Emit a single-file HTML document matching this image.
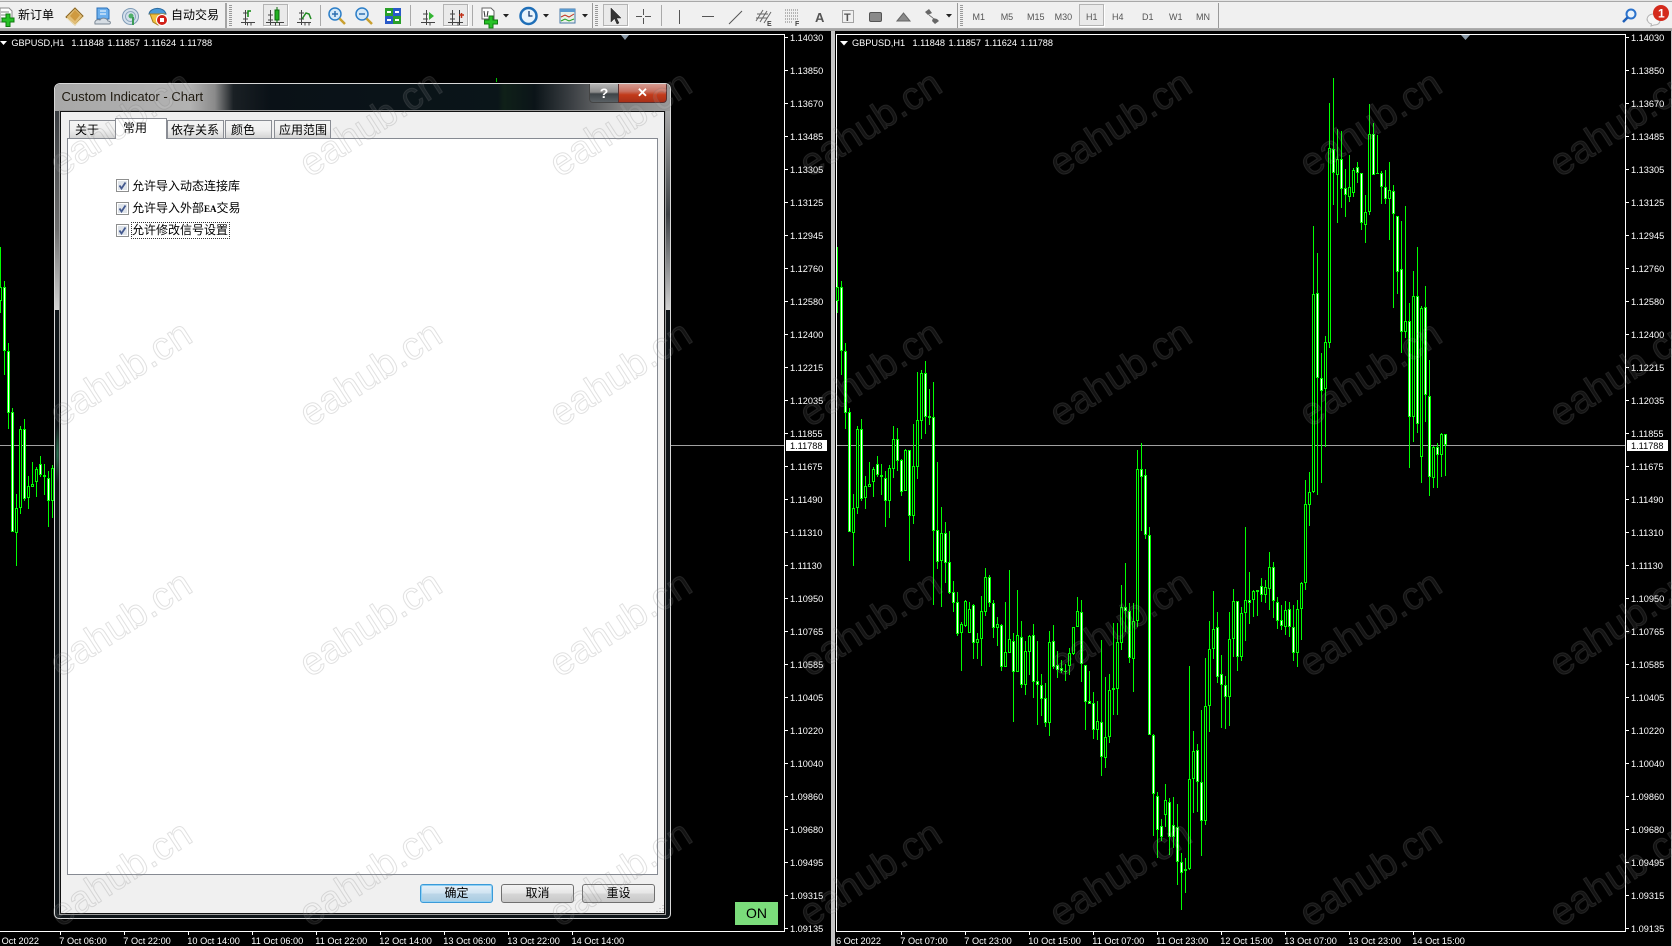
<!DOCTYPE html>
<html lang="zh">
<head>
<meta charset="utf-8">
<title>Custom Indicator - Chart</title>
<style>
html,body{margin:0;padding:0;background:#000}
#root{position:relative;width:1672px;height:946px;overflow:hidden;background:#000;font-family:"Liberation Sans","WenQuanYi Zen Hei","Noto Sans CJK SC",sans-serif}
svg{position:absolute;left:0;top:0;display:block}
.ct text{font:9.2px "Liberation Sans",sans-serif;fill:#fff}
.tf text{font:9px "Liberation Sans",sans-serif;fill:#555}
.abs{position:absolute}
#dlg{position:absolute;left:54px;top:83px;width:615px;height:834px;border:1px solid #d8d8d8;border-radius:6px 6px 5px 5px;background:#0f1519;overflow:hidden;z-index:2}
#tbar{position:absolute;left:0;top:0;width:615px;height:27px;background:linear-gradient(90deg,#a8a8a8 0,#b2b2b2 22%,#8a8a8a 26%,#1a2024 29%,#0a1117 35%,#0a1519 72%,#0f2018 73%,#0b1418 78%,#3c4044 84%,#808080 92%,#9a9a9a 100%)}
#ttl{position:absolute;left:6.5px;top:4px;font-size:13px;line-height:17px;color:#1f1a10;white-space:nowrap}
#help{position:absolute;left:534px;top:0;width:28px;height:18px;border:1px solid #444;border-top:0;border-radius:0 0 0 4px;background:linear-gradient(#b4b4b4,#8c8c8c 45%,#3e4448 55%,#5a6064);color:#fff;font:bold 14px/18px "Liberation Sans",sans-serif;text-align:center}
#close{position:absolute;left:563px;top:0;width:47px;height:18px;border:1px solid #5a3030;border-top:0;border-radius:0 0 4px 0;background:linear-gradient(#d49a90,#c87060 40%,#c23a1a 60%,#a83018);color:#fff;font:bold 13px/18px "Liberation Sans",sans-serif;text-align:center}
#inner{position:absolute;left:5px;top:27px;width:603px;height:801px;border:1px solid #111;background:#f0f0f0;box-shadow:0 0 0 1px #9a9a9a}
.fr{position:absolute}
.tab{position:absolute;top:36px;height:17px;border:1px solid #8a8d94;border-bottom:0;background:linear-gradient(#f4f4f4,#f0f0f0 50%,#d4d4d4);font-size:12px;line-height:19px;text-align:left;color:#000;box-sizing:content-box;white-space:nowrap}
#pane{position:absolute;left:12px;top:54px;width:589px;height:735px;border:1px solid #868a92;background:#fff}
.cb{position:absolute;left:48px;width:13px;height:13px}
.lb{position:absolute;left:64px;font-size:12px;line-height:16px;color:#000;white-space:nowrap}
.btn{position:absolute;top:800px;width:71px;height:17px;border:1px solid #707070;border-radius:3px;background:linear-gradient(#f3f3f3,#e6e6e6 48%,#d6d6d6 52%,#c8c8c8);font-size:12px;line-height:17px;text-align:center;color:#000}
#on{position:absolute;left:735px;top:902px;width:43px;height:23px;background:#7bdc7b;color:#000;font-size:14px;line-height:23px;text-align:center;z-index:2}
</style>
</head>
<body>
<div id="root">

<!-- charts -->
<svg class="ct" width="1672" height="946" viewBox="0 0 1672 946" style="z-index:1">
  <rect x="831" y="31" width="4" height="915" fill="#c4c4c4"/>
  <rect x="1671" y="31" width="1" height="915" fill="#c4c4c4"/>
  <g fill="#fff" shape-rendering="crispEdges">
    <rect x="0" y="34" width="785" height="1"/><rect x="784" y="34" width="1" height="898"/><rect x="0" y="931" width="785" height="1"/>
    <rect x="836" y="34" width="790" height="1"/><rect x="1625" y="34" width="1" height="898"/><rect x="836" y="34" width="1" height="898"/><rect x="836" y="931" width="790" height="1"/>
  </g>
  <path transform="translate(0 -1)" shape-rendering="crispEdges" stroke="#fff" fill="none" d="M785 38.5h3M785 71.5h3M785 104.5h3M785 137.5h3M785 170.5h3M785 203.5h3M785 236.5h3M785 269.5h3M785 302.5h3M785 335.5h3M785 368.5h3M785 401.5h3M785 434.5h3M785 467.5h3M785 500.5h3M785 533.5h3M785 566.5h3M785 599.5h3M785 632.5h3M785 665.5h3M785 698.5h3M785 731.5h3M785 764.5h3M785 797.5h3M785 830.5h3M785 863.5h3M785 896.5h3M785 929.5h3M1626 38.5h3M1626 71.5h3M1626 104.5h3M1626 137.5h3M1626 170.5h3M1626 203.5h3M1626 236.5h3M1626 269.5h3M1626 302.5h3M1626 335.5h3M1626 368.5h3M1626 401.5h3M1626 434.5h3M1626 467.5h3M1626 500.5h3M1626 533.5h3M1626 566.5h3M1626 599.5h3M1626 632.5h3M1626 665.5h3M1626 698.5h3M1626 731.5h3M1626 764.5h3M1626 797.5h3M1626 830.5h3M1626 863.5h3M1626 896.5h3M1626 929.5h3"/>
  <path shape-rendering="crispEdges" stroke="#fff" fill="none" d="M60.5 932v3M124.5 932v3M188.5 932v3M252.5 932v3M316.5 932v3M380.5 932v3M444.5 932v3M508.5 932v3M572.5 932v3M901.5 932v3M965.5 932v3M1029.5 932v3M1093.5 932v3M1157.5 932v3M1221.5 932v3M1285.5 932v3M1349.5 932v3M1413.5 932v3"/>
  <!-- crosshair -->
  <rect x="0" y="445" width="784" height="1" fill="#a0a0a0"/>
  <rect x="837" y="445" width="788" height="1" fill="#a0a0a0"/>
  <!-- candles -->
  <path id="cg" fill="#00ff00" shape-rendering="crispEdges" d=""/>
  <path id="cw" fill="#ffffff" shape-rendering="crispEdges" d=""/>
  <path id="cb" fill="#000000" shape-rendering="crispEdges" d=""/>
  <!-- scroll markers -->
  <path d="M621 35h8l-4 5z" fill="#8a9aa8"/>
  <path d="M1461 35h9l-4.500 5z" fill="#8a9aa8"/>
  <path d="M0 41h7l-3.500 4z" fill="#fff"/>
  <path d="M840 41h8l-4 4.500z" fill="#fff"/>
  <rect x="496" y="78" width="1" height="4" fill="#00c000"/>
  <!-- headers -->
  <text x="11.400" y="46">GBPUSD,H1</text><text x="71.400" y="46">1.11848</text><text x="107.500" y="46">1.11857</text><text x="143.600" y="46">1.11624</text><text x="179.600" y="46">1.11788</text>
  <text x="852" y="46">GBPUSD,H1</text><text x="912.500" y="46">1.11848</text><text x="948.500" y="46">1.11857</text><text x="984.500" y="46">1.11624</text><text x="1020.500" y="46">1.11788</text>
  <!-- left price axis -->
  <g>
  <text x="790" y="41">1.14030</text><text x="790" y="74">1.13850</text><text x="790" y="107">1.13670</text><text x="790" y="140">1.13485</text><text x="790" y="173">1.13305</text><text x="790" y="206">1.13125</text><text x="790" y="239">1.12945</text><text x="790" y="272">1.12760</text><text x="790" y="305">1.12580</text><text x="790" y="338">1.12400</text><text x="790" y="371">1.12215</text><text x="790" y="404">1.12035</text><text x="790" y="437">1.11855</text><text x="790" y="470">1.11675</text><text x="790" y="503">1.11490</text><text x="790" y="536">1.11310</text><text x="790" y="569">1.11130</text><text x="790" y="602">1.10950</text><text x="790" y="635">1.10765</text><text x="790" y="668">1.10585</text><text x="790" y="701">1.10405</text><text x="790" y="734">1.10220</text><text x="790" y="767">1.10040</text><text x="790" y="800">1.09860</text><text x="790" y="833">1.09680</text><text x="790" y="866">1.09495</text><text x="790" y="899">1.09315</text><text x="790" y="932">1.09135</text>
  </g>
  <!-- right price axis -->
  <g>
  <text x="1631" y="41">1.14030</text><text x="1631" y="74">1.13850</text><text x="1631" y="107">1.13670</text><text x="1631" y="140">1.13485</text><text x="1631" y="173">1.13305</text><text x="1631" y="206">1.13125</text><text x="1631" y="239">1.12945</text><text x="1631" y="272">1.12760</text><text x="1631" y="305">1.12580</text><text x="1631" y="338">1.12400</text><text x="1631" y="371">1.12215</text><text x="1631" y="404">1.12035</text><text x="1631" y="437">1.11855</text><text x="1631" y="470">1.11675</text><text x="1631" y="503">1.11490</text><text x="1631" y="536">1.11310</text><text x="1631" y="569">1.11130</text><text x="1631" y="602">1.10950</text><text x="1631" y="635">1.10765</text><text x="1631" y="668">1.10585</text><text x="1631" y="701">1.10405</text><text x="1631" y="734">1.10220</text><text x="1631" y="767">1.10040</text><text x="1631" y="800">1.09860</text><text x="1631" y="833">1.09680</text><text x="1631" y="866">1.09495</text><text x="1631" y="899">1.09315</text><text x="1631" y="932">1.09135</text>
  </g>
  <!-- current price -->
  <rect x="786" y="440" width="41" height="11" fill="#fff"/><text x="790" y="449" style="fill:#000">1.11788</text>
  <rect x="1627" y="440" width="41" height="11" fill="#fff"/><text x="1631" y="449" style="fill:#000">1.11788</text>
  <!-- time axis -->
  <text x="-6" y="944">6 Oct 2022</text><text x="59.300" y="944">7 Oct 06:00</text><text x="123.300" y="944">7 Oct 22:00</text><text x="187.300" y="944">10 Oct 14:00</text><text x="251.300" y="944">11 Oct 06:00</text><text x="315.300" y="944">11 Oct 22:00</text><text x="379.300" y="944">12 Oct 14:00</text><text x="443.300" y="944">13 Oct 06:00</text><text x="507.300" y="944">13 Oct 22:00</text><text x="571.500" y="944">14 Oct 14:00</text>
  <text x="836" y="944">6 Oct 2022</text><text x="900.300" y="944">7 Oct 07:00</text><text x="964.300" y="944">7 Oct 23:00</text><text x="1028.300" y="944">10 Oct 15:00</text><text x="1092.300" y="944">11 Oct 07:00</text><text x="1156.300" y="944">11 Oct 23:00</text><text x="1220.300" y="944">12 Oct 15:00</text><text x="1284.300" y="944">13 Oct 07:00</text><text x="1348.300" y="944">13 Oct 23:00</text><text x="1412.300" y="944">14 Oct 15:00</text>
</svg>

<!-- toolbar -->
<div class="abs" style="left:0;top:0;width:1672px;height:31px;background:#f0f0f0;z-index:1">
  <div class="abs" style="left:0;top:0;width:1672px;height:1px;background:#e4e4e4"></div>
  <div class="abs" style="left:0;top:1px;width:1672px;height:1px;background:#a8a8a8"></div>
  <div class="abs" style="left:0;top:28px;width:1672px;height:3px;background:linear-gradient(#b0b0b0,#9c9c9c)"></div>
  <div class="abs" style="left:18px;top:7px;font-size:12px;line-height:16px;color:#000;white-space:nowrap">新订单</div>
  <div class="abs" style="left:171px;top:7px;font-size:12px;line-height:16px;color:#000;white-space:nowrap">自动交易</div>
  <svg class="tf" width="1672" height="31" viewBox="0 0 1672 31">
   <g transform="translate(0 -1)">
    <!-- separators -->
    <g fill="none">
      <path d="M226 4V29" stroke="#8c8c8c" stroke-width="1.500"/>
      <path d="M230.500 6V27M596.500 6V27M961.500 6V27" stroke="#999" stroke-width="3" stroke-dasharray="1 1"/>
      <path d="M320.500 6V27M410.500 6V27M472.500 6V27M661.500 6V27" stroke="#aaa"/>
      <path d="M592.500 4V29M957.500 4V29M1218.500 4V29" stroke="#9a9a9a"/>
    </g>
    <!-- selected boxes -->
    <g fill="#eaeaea" stroke="#b4b4b4">
      <rect x="263.500" y="5.500" width="24" height="21"/><rect x="443.500" y="5.500" width="24" height="21"/><rect x="603.500" y="5.500" width="24" height="21"/><rect x="1079.500" y="5.500" width="24" height="21"/>
    </g>
    <path d="M264 27.500H288.500V6M444 27.500H468.500V6M604 27.500H628.500V6M1080 27.500H1104.500V6" stroke="#fff" fill="none"/>

    <!-- new order -->
    <path d="M0 9H9l3 3V23H0z" fill="#fff" stroke="#8a8a8a"/><path d="M1 13h8M1 16h8M1 19h5" stroke="#888"/>
    <path d="M6 15h4v4h4v4h-4v4.500H6V23H2v-4h4z" fill="#27c227" stroke="#0f7a0f"/>
    <!-- book diamond -->
    <path d="M75 9l8 8-8 9-9-8z" fill="#e2be78" stroke="#8a6520"/><path d="M67 19l8 7 8-8" fill="none" stroke="#f4e2b0"/><path d="M75 11l5 5-5 6-5-5z" fill="#cf9a40"/>
    <!-- blue doc cloud -->
    <path d="M97 9h10l2 2v9H97z" fill="#6cb0ee" stroke="#2a6fb8"/><path d="M100 12h6M100 15h6" stroke="#fff"/>
    <path d="M95 25c-1-4 3-5 5-4 2-3 7-2 8 1 3 0 3 3 1 3z" fill="#d6dde4" stroke="#7a8794"/>
    <!-- globe -->
    <circle cx="130.500" cy="17.500" r="8" fill="#d4e0ec" stroke="#7f9bb6"/><circle cx="130.500" cy="17.500" r="5" fill="none" stroke="#8fa8c0"/><circle cx="131" cy="17" r="2.500" fill="#4faf6a"/><path d="M133 18v8" stroke="#3c9c55" stroke-width="2"/>
    <!-- autotrade -->
    <path d="M149 15c1-7 15-8 17 0z" fill="#4a9ad8" stroke="#2a6aa0"/><path d="M150 15h15l-2 10-5 1-5-3z" fill="#f0c040" stroke="#a88020"/>
    <circle cx="162" cy="21" r="5.500" fill="#d02018" stroke="#fff"/><rect x="160" y="19" width="4" height="4" fill="#fff"/>
    <!-- chart type icons -->
    <g fill="none" stroke="#444">
      <path d="M245.500 11V26M241 23.500H255M243 14h5M243 20h5M251 23.500v3M247.500 23.500v3"/>
      <path d="M270.500 11V26M266 23.500H284M268 16h5M268 21h5M279.500 23.500v3M275.500 23.500v3"/>
      <path d="M301.500 11V26M297 23.500H311M299 14h5M299 20h5M305 23.500v3M309 23.500v3"/>
      <path d="M426.500 11V26M421 23.500H435M423 15h5M423 20h5M430 23.500v3"/>
      <path d="M452.500 11V26M448 23.500H463M450 15h5M450 20h5M458 23.500v3"/>
      <path d="M459.500 11V26" stroke="#333"/>
    </g>
    <path d="M248 18v-6h3" fill="none" stroke="#108a10" stroke-width="1.500"/>
    <rect x="275" y="11" width="4" height="10" fill="#22b022" stroke="#0a6a0a"/><path d="M277 8v3M277 21v3" stroke="#0a6a0a"/>
    <path d="M302 20l4-6 3 1 2 5" fill="none" stroke="#208a20" stroke-width="1.500"/>
    <path d="M429 13l5 4-5 4z" fill="#33b533"/>
    <path d="M459 16h5M461.500 14v5" stroke="#c03018" stroke-width="1.500"/>
    <!-- zoom -->
    <circle cx="335" cy="15" r="6" fill="#d5e9f8" stroke="#2d7fc8" stroke-width="1.500"/><path d="M332 15h6M335 12v6" stroke="#2d6fb0" stroke-width="1.500"/><path d="M339.500 19.500l5.500 5.500" stroke="#c9a030" stroke-width="2.500"/>
    <circle cx="362" cy="15" r="6" fill="#d5e9f8" stroke="#2d7fc8" stroke-width="1.500"/><path d="M359 15h6" stroke="#2d6fb0" stroke-width="1.500"/><path d="M366.500 19.500l5.500 5.500" stroke="#c9a030" stroke-width="2.500"/>
    <!-- tile -->
    <rect x="385" y="9" width="8" height="8" fill="#2aa02a"/><rect x="393" y="9" width="8" height="8" fill="#2a5ac8"/><rect x="385" y="17" width="8" height="8" fill="#2a5ac8"/><rect x="393" y="17" width="8" height="8" fill="#2aa02a"/>
    <path d="M387 13h4M395 13h4M387 21h4M395 21h4" stroke="#fff" stroke-width="2"/>
    <!-- indicators -->
    <path d="M482 9h9l3 3v8h-12z" fill="#fff" stroke="#666"/><path d="M484 12l1 6M488 12l-1 6" stroke="#333"/>
    <path d="M489 17h4v4h4.500v4H493v4h-4v-4h-4.500v-4H489z" fill="#27c227" stroke="#0f7a0f"/>
    <path d="M503 15h6l-3 3.500z" fill="#222"/>
    <!-- clock -->
    <circle cx="528.500" cy="17" r="8" fill="#e8f4fc" stroke="#1f6fb8" stroke-width="2.500"/><path d="M529 12v5h3.500" fill="none" stroke="#123a70" stroke-width="1.300"/>
    <path d="M543 15h6l-3 3.500z" fill="#222"/>
    <!-- templates -->
    <rect x="560" y="10" width="15" height="14" fill="#e8f0e8" stroke="#4a7aa8"/><rect x="560" y="10" width="15" height="3" fill="#5a9ad0"/><path d="M561 18l4-2 4 2 5-3" fill="none" stroke="#c03020"/><path d="M561 22l4-2 4 2 5-2" fill="none" stroke="#20a020"/>
    <path d="M582 15h6l-3 3.500z" fill="#222"/>
    <!-- cursor -->
    <path d="M611 9v14l3.500-3.500 2.500 5.500 2-1-2.500-5h4.500z" fill="#333" stroke="#222" stroke-width=".500"/>
    <!-- crosshair -->
    <path d="M643.500 10v6M643.500 19v6M636 17.500h6M645 17.500h6" stroke="#555" fill="none"/>
    <!-- line tools -->
    <path d="M679.500 11V25M702 17.500H714M729 25L742 12" stroke="#555" fill="none"/>
    <path d="M756 22l7-11M760 23l7-11M764 24l7-11M757 15h11M756 19h11" stroke="#666" fill="none"/>
    <text x="767" y="27" style="font:bold 7px 'Liberation Sans',sans-serif;fill:#444">E</text>
    <path d="M785 11h14M785 14h14M785 17h14M785 20h14M785 23h8" stroke="#777" stroke-dasharray="1 1" fill="none"/>
    <text x="795" y="27" style="font:bold 7px 'Liberation Sans',sans-serif;fill:#444">F</text>
    <text x="815" y="23" style="font:bold 13px 'Liberation Sans',sans-serif;fill:#555">A</text>
    <rect x="842.500" y="11.500" width="11" height="12" fill="none" stroke="#555" stroke-dasharray="1 1"/>
    <text x="844" y="22" style="font:bold 11px 'Liberation Sans',sans-serif;fill:#555">T</text>
    <rect x="869.500" y="13.500" width="12" height="9" rx="1.500" fill="#8a8a8a" stroke="#555"/>
    <path d="M897 22l6.500-8 6.500 8z" fill="#8a8a8a" stroke="#666"/>
    <path d="M925 13l4-3 3 4-4 2zM933 19l4 1 2 2-4 3-3-3z" fill="#666"/><path d="M929 16l4 3" stroke="#777"/>
    <path d="M946 15h6l-3 3.500z" fill="#222"/>
    <!-- timeframes -->
    <text x="972.500" y="21">M1</text><text x="1000.700" y="21">M5</text><text x="1027" y="21">M15</text><text x="1054.600" y="21">M30</text><text x="1086" y="21">H1</text><text x="1112" y="21">H4</text><text x="1142" y="21">D1</text><text x="1169" y="21">W1</text><text x="1196" y="21">MN</text>
    <!-- search -->
    <circle cx="1631" cy="15" r="4.500" fill="#eaf3fb" stroke="#2b72cc" stroke-width="2"/><path d="M1627.500 18.500l-4.500 4.500" stroke="#1f5fb8" stroke-width="2.500"/>
    <!-- notification -->
    <path d="M1647 21c0-4 3-6 6.500-6s6.500 2 6.500 6-3 5-6 5l-3 1 .5-2c-2-.5-4-2-4-4z" fill="#f6f6f6" stroke="#b4b4b4"/>
    <circle cx="1661" cy="14" r="8" fill="#d42a1c"/><text x="1658" y="18.500" style="font:bold 12px 'Liberation Sans',sans-serif;fill:#fff">1</text>
   </g>
  </svg>
</div>

<!-- dialog -->
<div id="dlg">
  <div class="fr" style="left:0;top:27px;width:5px;height:199px;background:linear-gradient(#3a3e42,#707070 60%,#d4d4d4)"></div>
  <div class="fr" style="left:0;top:340px;width:5px;height:60px;background:radial-gradient(ellipse at 50% 50%,#2f7a58,#101519 70%)"></div>
  <div class="fr" style="left:611px;top:27px;width:5px;height:199px;background:linear-gradient(#a8a8a8,#3c4044 52%,#d0d0d0)"></div>
  <div id="tbar"></div>
  <div id="ttl">Custom Indicator - Chart</div>
  <div id="help">?</div>
  <div id="close">✕</div>
  <div id="inner"></div>
  <div id="pane">
    <div class="cb" style="top:40px"><svg width="13" height="13" viewBox="0 0 13 13"><rect x=".5" y=".5" width="12" height="12" fill="#fff" stroke="#8e8f8f"/><rect x="2" y="2" width="9" height="9" fill="#dfe4ea"/><path d="M3.500 6.500l2 3 4-6" fill="none" stroke="#44598f" stroke-width="1.800"/></svg></div>
    <div class="lb" style="top:39px">允许导入动态连接库</div>
    <div class="cb" style="top:63px"><svg width="13" height="13" viewBox="0 0 13 13"><rect x=".5" y=".5" width="12" height="12" fill="#fff" stroke="#8e8f8f"/><rect x="2" y="2" width="9" height="9" fill="#dfe4ea"/><path d="M3.500 6.500l2 3 4-6" fill="none" stroke="#44598f" stroke-width="1.800"/></svg></div>
    <div class="lb" style="top:61px">允许导入外部<span style="font:bold 9px 'Liberation Serif',serif">EA</span>交易</div>
    <div class="cb" style="top:85px"><svg width="13" height="13" viewBox="0 0 13 13"><rect x=".5" y=".5" width="12" height="12" fill="#fff" stroke="#8e8f8f"/><rect x="2" y="2" width="9" height="9" fill="#dfe4ea"/><path d="M3.500 6.500l2 3 4-6" fill="none" stroke="#44598f" stroke-width="1.800"/></svg></div>
    <div class="lb" style="top:84px;outline:1px dotted #333;outline-offset:0;height:15px;width:97px;line-height:15px">允许修改信号设置</div>
  </div>
  <div class="tab" style="left:14px;width:45px;text-indent:5px">关于</div>
  <div class="tab" style="left:60px;top:34px;height:20px;width:50px;background:#fff;line-height:18px;z-index:2;text-indent:7px">常用</div>
  <div class="tab" style="left:112px;width:55px;text-indent:3px">依存关系</div>
  <div class="tab" style="left:170px;width:45px;text-indent:5px">颜色</div>
  <div class="tab" style="left:219px;width:55px;text-indent:4px">应用范围</div>
  <div class="btn" style="left:365px;border-color:#3a9ad8;background:linear-gradient(#e6f0f8,#d0e4f2 48%,#bcd6e8 52%,#a8cce2);box-shadow:inset 0 0 0 1px #8fd0f4">确定</div>
  <div class="btn" style="left:446px">取消</div>
  <div class="btn" style="left:527px">重设</div>
  <svg width="10" height="10" viewBox="0 0 10 10" style="left:600px;top:819px"><path d="M8 2v1M5 5v1M8 5v1M2 8v1M5 8v1M8 8v1" stroke="#a8a8a8"/></svg>
</div>

<div id="on">ON</div>

<!-- watermark -->
<svg width="1672" height="946" viewBox="0 0 1672 946" style="z-index:3;pointer-events:none">
  <g font-family="'Liberation Sans',sans-serif" font-size="39" fill="rgba(255,255,255,.08)" stroke="rgba(120,120,120,.22)" stroke-width="1">
    <text transform="translate(60 178) rotate(-33)">eahub.cn</text><text transform="translate(310 178) rotate(-33)">eahub.cn</text><text transform="translate(560 178) rotate(-33)">eahub.cn</text><text transform="translate(810 178) rotate(-33)">eahub.cn</text><text transform="translate(1060 178) rotate(-33)">eahub.cn</text><text transform="translate(1310 178) rotate(-33)">eahub.cn</text><text transform="translate(1560 178) rotate(-33)">eahub.cn</text>
    <text transform="translate(60 428) rotate(-33)">eahub.cn</text><text transform="translate(310 428) rotate(-33)">eahub.cn</text><text transform="translate(560 428) rotate(-33)">eahub.cn</text><text transform="translate(810 428) rotate(-33)">eahub.cn</text><text transform="translate(1060 428) rotate(-33)">eahub.cn</text><text transform="translate(1310 428) rotate(-33)">eahub.cn</text><text transform="translate(1560 428) rotate(-33)">eahub.cn</text>
    <text transform="translate(60 678) rotate(-33)">eahub.cn</text><text transform="translate(310 678) rotate(-33)">eahub.cn</text><text transform="translate(560 678) rotate(-33)">eahub.cn</text><text transform="translate(810 678) rotate(-33)">eahub.cn</text><text transform="translate(1060 678) rotate(-33)">eahub.cn</text><text transform="translate(1310 678) rotate(-33)">eahub.cn</text><text transform="translate(1560 678) rotate(-33)">eahub.cn</text>
    <text transform="translate(60 928) rotate(-33)">eahub.cn</text><text transform="translate(310 928) rotate(-33)">eahub.cn</text><text transform="translate(560 928) rotate(-33)">eahub.cn</text><text transform="translate(810 928) rotate(-33)">eahub.cn</text><text transform="translate(1060 928) rotate(-33)">eahub.cn</text><text transform="translate(1310 928) rotate(-33)">eahub.cn</text><text transform="translate(1560 928) rotate(-33)">eahub.cn</text>
  </g>
</svg>
</div>

<script>
var D=[
[260,[
[-39,80,122,158,0],[62,82,274,345,1],[250,274,460,507,1],[445,455,815,815,1],[702,745,818,917,0],[498,508,745,762,0],[477,508,718,722,1],[648,677,713,747,0],[606,673,680,680,0],[622,628,665,710,0],[588,613,646,652,1],[612,646,651,705,1],[633,655,722,800,1],[615,625,722,773,0],[498,538,626,655,0],[505,538,602,632,1],[598,601,695,707,1],[568,570,692,693,0],[570,571,767,902,1],[492,619,767,792,0],[336,481,620,657,0],[330,340,482,537,0],[303,340,470,522,1],[388,468,473,495,1],[366,472,812,1035,1],[606,811,905,927,1],[741,820,903,1040,0],[786,820,908,968,1],[813,907,1000,1002,1],[963,997,1028,1055,1],[996,1027,1122,1127,1]
]],
[560,[
[187,192,220,333,0],[120,124,197,200,0],[126,148,218,220,0],[132,136,250,297,1],[218,238,250,297,0],[108,154,238,317,0],[24,52,155,168,0],[45,52,128,140,1],[120,128,203,233,1],[172,193,203,257,0],[192,194,320,332,1],[126,275,320,320,0],[30,238,278,280,0],[218,242,335,485,1],[90,226,335,335,0],[183,230,374,385,1],[243,274,374,405,0],[225,229,275,345,0],[192,226,365,415,1],[243,364,374,495,1],[343,376,416,468,1],[370,415,488,500,1],[212,247,488,527,0],[195,244,320,327,1],[273,316,330,355,1],[300,324,333,340,1],[313,334,336,362,1],[265,280,317,345,0],[200,202,282,285,0],[112,154,200,200,0],[120,157,312,365,1],[316,316,425,510,1],[333,424,431,432,1],[395,430,509,536,1],[422,484,509,540,0]
]],
[480,[
[480,727,832,887,1],[592,770,833,865,0],[583,630,770,790,0],[428,625,630,705,1],[430,487,627,705,0],[316,382,490,510,0],[250,382,393,455,1],[370,392,535,548,1],[368,422,538,635,0],[-90,-33,422,440,0],[-112,-32,-10,152,1],[-33,-14,165,177,1],[142,164,764,764,1],[763,764,943,1067,1],[937,947,1051,1133,1],[1018,1037,1070,1082,1],[912,961,1006,1040,0],[955,965,1070,1125,1],[952,1036,1070,1105,1],[972,1042,1145,1215,1],[1118,1147,1178,1290,1],[1133,1167,1174,1238,0],[558,898,1168,1170,0],[753,814,896,1000,0],[792,811,907,996,1],[690,907,1022,1127,1],[534,677,1023,1035,0],[423,508,677,755,0],[334,448,506,537,0],[396,442,590,610,1],[525,581,616,743,1],[588,616,652,748,1],[396,478,650,737,0],[327,364,476,530,0],[364,364,532,572,1],[382,400,532,543,0],[141,361,400,482,0],[276,361,368,432,1],[330,332,361,412,0],[330,331,335,408,1],[293,317,344,367,1],[300,322,344,370,0],[216,262,328,390,0],[247,260,364,415,1],[352,365,422,447,1],[375,421,437,450,1],[363,389,440,465,0],[365,388,441,470,1],[376,442,518,543,1],[360,388,518,560,0],[305,310,388,480,0]
]],
[70,[
[1230,1303,1539,1560,0],[1205,1267,1305,1367,0],[468,673,1265,1270,0],[550,670,923,1275,1],[850,925,962,1240,1],[798,817,958,1130,0],[98,235,818,835,0],[24,238,308,405,1],[178,268,314,458,0],[183,268,356,413,1],[297,355,374,440,1],[255,352,382,395,0],[293,301,370,380,0],[277,292,310,340,1],[310,310,458,480,1],[375,427,464,520,0],[103,193,427,435,0],[160,193,314,315,1],[195,309,312,310,1],[302,310,350,402,1],[300,350,388,403,1],[277,361,388,510,0],[346,364,433,713,1],[438,438,605,672,1],[453,598,785,848,1],[408,752,785,803,0],[700,752,1040,1193,1],[603,677,1040,1115,0],[532,677,1063,1090,1],[708,715,1162,1240,0],[648,710,974,1055,1],[870,977,1220,1277,1],[1128,1132,1225,1255,0],[1118,1132,1155,1255,1],[1090,1093,1155,1220,0],[1092,1093,1125,1217,1]
]]
];
var g='',w='',b='',k=0;
function Y(o,z){return Math.round(o+z/3)}
D.forEach(function(s){var o=s[0];s[1].forEach(function(c){
  var wt=Y(o,c[0]),bt=Y(o,c[1]),bb=Y(o,c[2]),wb=Y(o,c[3]);
  if(wb<=wt)wb=wt+1; if(bb<=bt)bb=bt+1;
  [837,0].forEach(function(dx){
    var x=dx+4*k;
    if(dx===0&&x>53)return;
    g+='M'+x+' '+wt+'h1V'+wb+'h-1z';
    g+='M'+(x-1)+' '+bt+'h3V'+bb+'h-3z';
    if(bb-bt>2){var p='M'+x+' '+(bt+1)+'h1V'+(bb-1)+'h-1z'; if(c[4])w+=p; else b+=p;}
  });
  k++;
});});
document.getElementById('cg').setAttribute('d',g);
document.getElementById('cw').setAttribute('d',w);
document.getElementById('cb').setAttribute('d',b);
</script>
</body>
</html>
